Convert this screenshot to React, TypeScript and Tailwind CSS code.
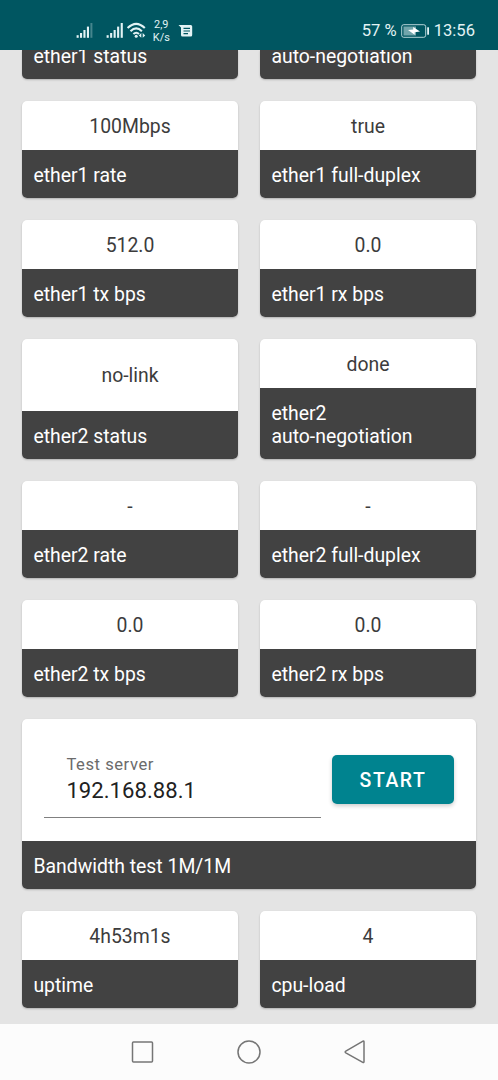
import React from "react";

type Metric = { value: string; label: React.ReactNode };

const topRows: [Metric, Metric][] = [
  [
    { value: "100Mbps", label: "ether1 rate" },
    { value: "true", label: "ether1 full-duplex" },
  ],
  [
    { value: "512.0", label: "ether1 tx bps" },
    { value: "0.0", label: "ether1 rx bps" },
  ],
  [
    { value: "no-link", label: "ether2 status" },
    { value: "done", label: <>ether2<br />auto-negotiation</> },
  ],
  [
    { value: "-", label: "ether2 rate" },
    { value: "-", label: "ether2 full-duplex" },
  ],
  [
    { value: "0.0", label: "ether2 tx bps" },
    { value: "0.0", label: "ether2 rx bps" },
  ],
];

function Label({ children }: { children: React.ReactNode }) {
  return (
    <div className="bg-[#424242] pt-[14px] pr-[11px] pb-[11px] pl-[11.4px] text-[19.4px] leading-[23px] text-white">
      {children}
    </div>
  );
}

function Card({ value, label }: Metric) {
  return (
    <div className="flex flex-1 flex-col overflow-hidden rounded-[5px] bg-white shadow-[0_1px_2px_rgba(0,0,0,0.22)]">
      <div className="flex min-h-[49px] flex-1 items-center justify-center pt-[1.5px] text-[19.4px] leading-[23px] text-[#3c3c3c]">
        {value}
      </div>
      <Label>{label}</Label>
    </div>
  );
}

function Row({ items }: { items: [Metric, Metric] }) {
  return (
    <div className="flex shrink-0 gap-[22px]">
      {items.map((m, i) => (
        <Card key={i} {...m} />
      ))}
    </div>
  );
}

function ClippedLabel({ children }: { children: string }) {
  return (
    <div className="flex h-[29px] flex-1 items-end rounded-b-[5px] bg-[#424242] pb-[11px] pl-[11.4px] text-[19.4px] leading-[23px] text-white shadow-[0_1px_2px_rgba(0,0,0,0.22)]">
      {children}
    </div>
  );
}

function StatusBar() {
  return (
    <header className="relative z-10 flex h-[50px] shrink-0 items-start justify-between bg-[#005661] pr-[23px] pl-[76px] text-[#e3f3f5]">
      <div className="flex pt-[15px]">
        <svg className="h-[30px] w-[124px]" viewBox="76 15 124 30" fill="currentColor">
          <rect x="76.6" y="35.2" width="2.1" height="2.6" />
          <rect x="80" y="33" width="2.1" height="4.8" />
          <rect x="83.4" y="30" width="2.1" height="7.8" />
          <rect x="86.900" y="26.6" width="2.1" height="11.2" />
          <rect x="90.400" y="23" width="2" height="14.8" opacity=".3" />
          <rect x="106.600" y="35.2" width="2.1" height="2.6" />
          <rect x="110.100" y="33" width="2.1" height="4.8" />
          <rect x="113.600" y="30" width="2.1" height="7.8" />
          <rect x="117.100" y="26.6" width="2.1" height="11.2" />
          <rect x="120.700" y="23" width="2.1" height="14.8" />
          <g fill="none" stroke="currentColor" strokeWidth="2.100">
            <path d="M127.600 28Q136.200 19.600 144.800 28" />
            <path d="M130.500 31.200Q136.200 25.600 141.900 31.200" />
            <path d="M133.400 34.100Q136.200 31.400 139 34.100" />
          </g>
          <circle cx="136.200" cy="36.200" r="1.500" />
          <path d="M141.300 33v4.800l-2.500-2.400zM142.700 33v4.800l2.500-2.400z" />
          <text x="161.300" y="28" textAnchor="middle" fontSize="10.900">2,9</text>
          <text x="161.300" y="41" textAnchor="middle" fontSize="10.900">K/s</text>
          <path
            fillRule="evenodd"
            d="M178.500 25H190.700Q192.200 25 192.200 26.500V35Q192.200 36.500 190.700 36.500H182.500Q181 36.500 181 35V27.500ZM183.500 27.800V29H190V27.800ZM183.500 30.400V31.600H190V30.400ZM183.500 33V34.200H188V33Z"
          />
        </svg>
      </div>
      <div className="flex items-center pt-[20px] text-[16.6px] leading-[22px]">
        <span>57 %</span>
        <svg className="mx-[4px] h-[14px] w-[29px]" viewBox="0 0 29 14">
          <rect x=".7" y=".7" width="24" height="12.600" rx="2" fill="none" stroke="currentColor" strokeWidth="1" opacity=".8" />
          <rect x="2.500" y="2.500" width="12.500" height="9" fill="currentColor" opacity=".5" />
          <path d="M7 6L12.200 5.400V3L19 7.400L13.700 8.200V10.700Z" fill="#fff" />
          <rect x="26.200" y="3.300" width="1.800" height="7.400" fill="currentColor" />
        </svg>
        <span>13:56</span>
      </div>
    </header>
  );
}

export default function App() {
  return (
    <div className="flex h-[1080px] w-[498px] flex-col overflow-hidden bg-[#e4e4e4] font-['Roboto',sans-serif]">
      <StatusBar />
      <main className="flex min-h-0 flex-1 flex-col justify-end gap-[22px] px-[22px] pb-4">
        <div className="flex shrink-0 gap-[22px]">
          <ClippedLabel>ether1 status</ClippedLabel>
          <ClippedLabel>auto-negotiation</ClippedLabel>
        </div>
        {topRows.map((r, i) => (
          <Row key={i} items={r} />
        ))}
        <section className="shrink-0 overflow-hidden rounded-[5px] bg-white shadow-[0_1px_2px_rgba(0,0,0,0.22)]">
          <div className="flex h-[122px] items-start justify-between px-[22px]">
            <div className="mt-[22px] h-[77px] w-[277px] border-b border-[#808080] pt-[14px] pl-[22.4px]">
              <div className="text-[16.6px] leading-[20px] tracking-[0.55px] text-[#6b6b6b]">Test server</div>
              <div className="mt-[2px] text-[22.1px] leading-[26px] tracking-[0.03px] text-[#212121]">192.168.88.1</div>
            </div>
            <button className="mt-[36px] h-[49px] w-[122px] rounded-[5px] bg-[#00838f] pt-[2px] text-[19.4px] font-medium tracking-[1.6px] text-white shadow-[0_2px_4px_rgba(0,0,0,0.2)]">
              START
            </button>
          </div>
          <Label>Bandwidth test 1M/1M</Label>
        </section>
        <Row items={[{ value: "4h53m1s", label: "uptime" }, { value: "4", label: "cpu-load" }]} />
      </main>
      <nav className="flex h-14 shrink-0 items-center justify-center bg-[#fcfcfc]">
        <svg className="h-14 w-[240px]" viewBox="129 1024 240 56" fill="none" stroke="#757575" strokeWidth="1.500" strokeLinejoin="round">
          <rect x="132.500" y="1042" width="20" height="20" rx="1" />
          <circle cx="249" cy="1052" r="11" />
          <path d="M363 1041.200Q364 1040.700 364 1042V1061.500Q364 1063 362.800 1062.300L345.800 1052.800Q344.500 1052 345.800 1051.200Z" />
        </svg>
      </nav>
    </div>
  );
}
